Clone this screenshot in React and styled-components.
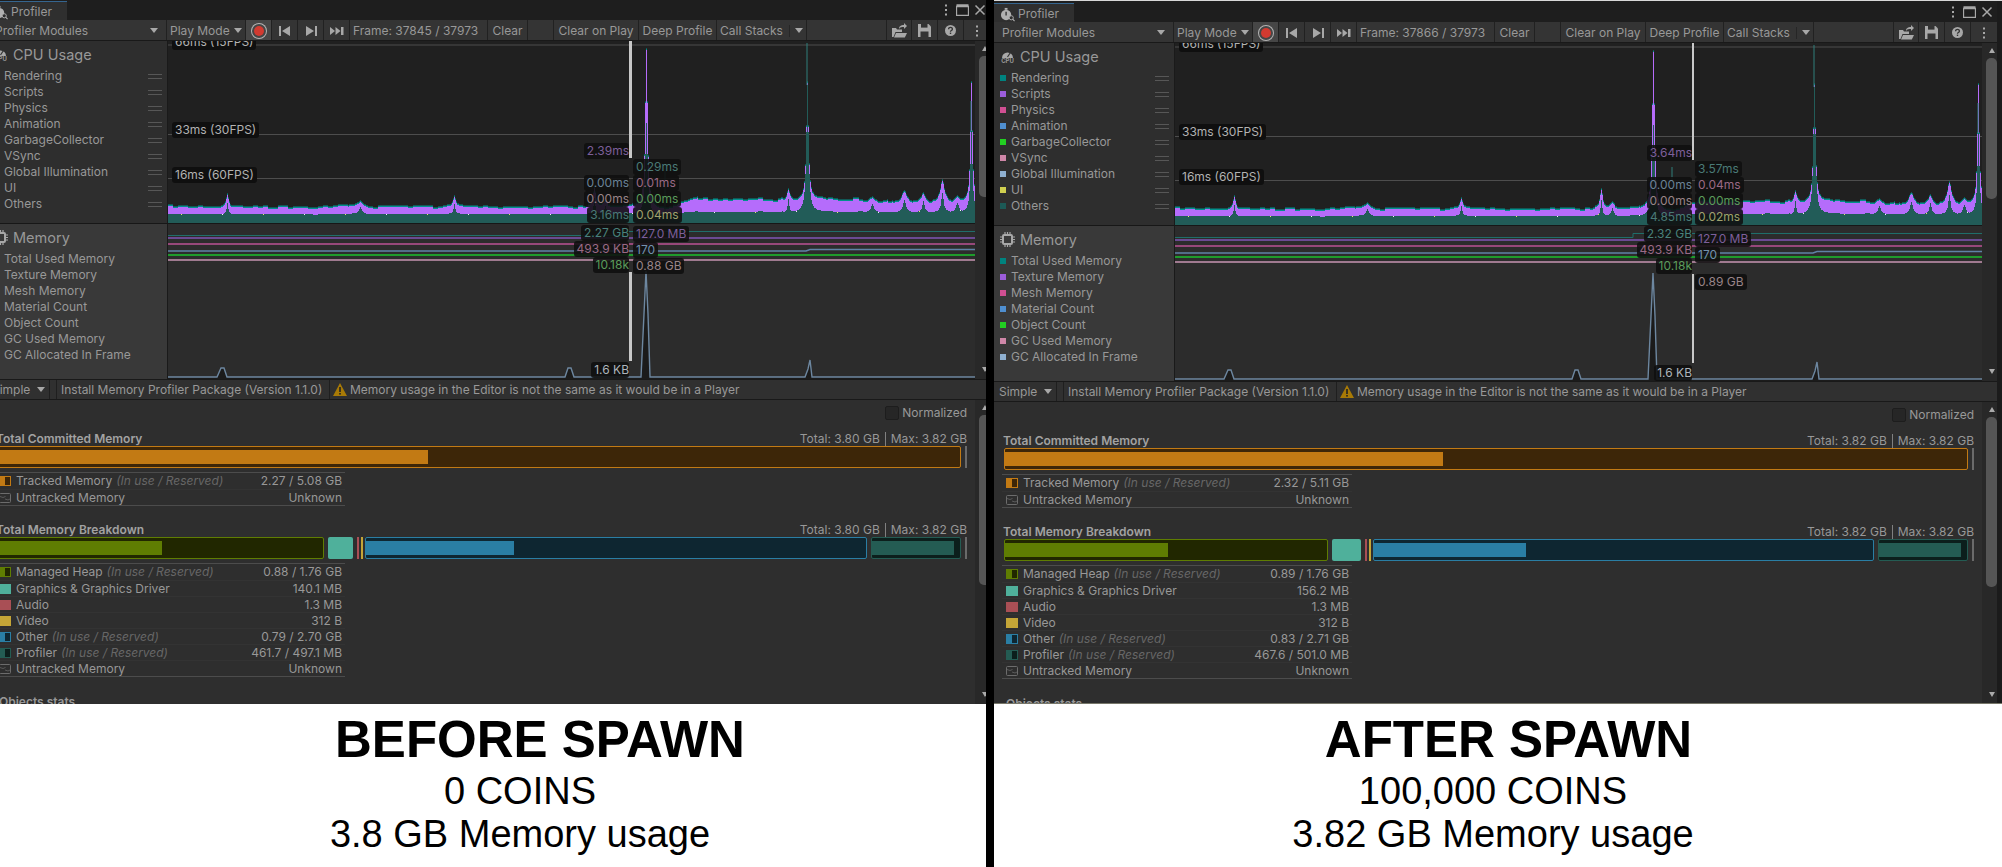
import styled, { createGlobalStyle } from 'styled-components'

const GlobalStyle = createGlobalStyle`
  html, body { margin: 0; padding: 0; background: #000; overflow: hidden; }
  * { box-sizing: border-box; }
`

const CHART_W = 807
const CPU_H = 182
const MEM_H = 155

// same history in both captures, so the graph only gets built once
const SPIKES = [
  [59, 154, 1.6], [192, 161, 3], [286, 156, 1.6], [426, 147, 1.6], [437, 160, 2.2],
  [478, 9, 1.4, 82], [620, 149, 1.5], [639, 42, 1.3, 44], [704, 157, 2.5], [736, 151, 3.2],
  [755, 153, 2.2], [774, 140, 2.4], [789, 156, 3], [803, 42, 1.2, 90]
]

const lorentz = (d, w) => 1 / (1 + (d / w) * (d / w))

function buildCpu () {
  let seed = 7
  const rnd = () => {
    seed = (seed * 16807) % 2147483647
    return seed / 2147483647
  }
  let purple = ''
  let strip = ''
  let dark = ''
  let specks = []
  let wobble = 0
  for (let x = 0; x < CHART_W; x++) {
    if (x % 5 === 0) wobble = wobble * 0.5 + (rnd() - 0.5) * 2.6
    const rise = x < 500 ? 0 : Math.min(1, (x - 500) / 30)
    const top0 = 166.5 - rise * 7 + wobble + (x > 690 ? 2 : 0)
    const bottom0 = 173 - rise * 2 + wobble * 0.3
    let top = top0
    let darkTop = bottom0
    SPIKES.forEach(([sx, peak, w, tealPeak]) => {
      const d = Math.abs(x - sx)
      top = Math.min(top, top0 - (top0 - peak) * lorentz(d, w))
      if (tealPeak) darkTop = Math.min(darkTop, bottom0 - (bottom0 - tealPeak) * lorentz(d, w))
      else darkTop = Math.min(darkTop, bottom0 - (bottom0 - peak) * 0.6 * lorentz(d, w * 0.6))
    })
    top = Math.round(top)
    darkTop = Math.max(top, Math.round(darkTop))
    strip += `M${x} ${top - 1.5}h1V${top}h-1z`
    if (darkTop > top) purple += `M${x} ${top}h1V${darkTop}h-1z`
    dark += `M${x} ${darkTop}h1V${CPU_H}h-1z`
    if (x % 41 === 13) specks.push({ x, y: darkTop, c: x % 2 ? '#e6e66a' : '#f2f2f2' })
  }
  return { purple, strip, dark, specks }
}

const cpu = buildCpu()

const CPU_LINES = [4, 93.5, 137.5]
const MEM_LINES = [
  { d: 'M0 11.5H458V7.5H807', c: '#1f6e6a', w: 1 },
  { d: 'M0 14H807', c: '#6b4a93', w: 2 },
  { d: 'M0 20H807', c: '#97487a', w: 2 },
  { d: 'M0 27H638L642 25.5H807', c: '#5f82a6', w: 1.5 },
  { d: 'M0 31H807', c: '#1f9b2c', w: 2 },
  { d: 'M0 36H807', c: '#a07a90', w: 2 }
]
const MEM_PEAKS = 'M0 153H49L53 144L56 144L59 153H397L400 144L403 144L406 153H473L476 90L478 47L480 90L482 153H637L640 145L642 136L644 153H807'

const CPU_ROWS = [
  ['Rendering', '#00837f'], ['Scripts', '#9c5ddb'], ['Physics', '#d04f92'], ['Animation', '#4f8fd0'],
  ['GarbageCollector', '#22cf22'], ['VSync', '#cf87a8'], ['Global Illumination', '#8fb0d0'],
  ['UI', '#cfcf4f'], ['Others', '#1c5a56']
]
const MEM_ROWS = [
  ['Total Used Memory', '#00837f'], ['Texture Memory', '#9c5ddb'], ['Mesh Memory', '#d04f92'],
  ['Material Count', '#4f8fd0'], ['Object Count', '#22cf22'], ['GC Used Memory', '#cf87a8'],
  ['GC Allocated In Frame', '#8fb0d0']
]

const tone = {
  purple: '#7d5f9a', slate: '#6a8296', rose: '#998488', teal: '#4a7a76', tealLight: '#4a817c',
  pink: '#9a6a85', green: '#5b9c5b', olive: '#9fa16d', white: '#aeb5bc', blue: '#7391ad'
}

const PANELS = {
  left: {
    frame: '37845 / 37973',
    cursorX: 642,
    cursorW: 3,
    labelsBefore: [
      ['2.39ms', 102, tone.purple], ['0.00ms', 134, tone.slate], ['0.00ms', 150, tone.rose], ['3.16ms', 166, tone.teal],
      ['2.27 GB', 184, tone.tealLight], ['493.9 KB', 200, tone.pink], ['10.18k', 216, tone.green], ['1.6 KB', 321, tone.white]
    ],
    labelsAfter: [
      ['0.29ms', 118, tone.teal], ['0.01ms', 134, tone.pink], ['0.00ms', 150, tone.green], ['0.04ms', 166, tone.olive],
      ['127.0 MB', 185, tone.purple], ['170', 201, tone.blue], ['0.88 GB', 217, tone.rose]
    ],
    total: '3.80 GB',
    tracked: '2.27 / 5.08 GB',
    trackedFill: 430,
    segments: { green: [327, 164], teal: 25, blue: [502, 148], profiler: [90, 82] },
    rows: ['0.88 / 1.76 GB', '140.1 MB', '1.3 MB', '312 B', '0.79 / 2.70 GB', '461.7 / 497.1 MB', 'Unknown']
  },
  right: {
    frame: '37866 / 37973',
    cursorX: 698,
    cursorW: 2,
    labelsBefore: [
      ['3.64ms', 102, tone.purple], ['0.00ms', 134, tone.slate], ['0.00ms', 150, tone.rose], ['4.85ms', 166, tone.teal],
      ['2.32 GB', 183, tone.tealLight], ['493.9 KB', 199, tone.pink], ['10.18k', 215, tone.green], ['1.6 KB', 322, tone.white]
    ],
    labelsAfter: [
      ['3.57ms', 118, tone.teal], ['0.04ms', 134, tone.pink], ['0.00ms', 150, tone.green], ['0.02ms', 166, tone.olive],
      ['127.0 MB', 188, tone.purple], ['170', 204, tone.blue], ['0.89 GB', 231, tone.rose]
    ],
    total: '3.82 GB',
    tracked: '2.32 / 5.11 GB',
    trackedFill: 438,
    segments: { green: [324, 163], teal: 29, blue: [501, 152], profiler: [90, 82] },
    rows: ['0.89 / 1.76 GB', '156.2 MB', '1.3 MB', '312 B', '0.83 / 2.71 GB', '467.6 / 501.0 MB', 'Unknown']
  }
}

const C = {
  amber: ['#c27a14', '#3d2608'],
  green: ['#5f7d02', '#212700'],
  teal: ['#4fb09b', '#4fb09b'],
  audio: ['#a94f55', '#a94f55'],
  video: ['#c4a537', '#c4a537'],
  blue: ['#2a7ea4', '#0e2631'],
  profiler: ['#245c53', '#0c1f1c']
}

function StopwatchIcon () {
  return (
    <svg width='15' height='15' viewBox='0 0 16 16'>
      <circle cx='6.5' cy='8.5' r='5.5' fill='#b0b0b0' />
      <rect x='5' y='1' width='3' height='2' fill='#b0b0b0' />
      <path d='M6.5 5v4' stroke='#2e2e2e' strokeWidth='1.4' />
      <circle cx='12' cy='11.5' r='2.2' fill='#2e2e2e' stroke='#b0b0b0' />
      <path d='M13.5 13l2 2' stroke='#b0b0b0' strokeWidth='1.2' />
    </svg>
  )
}

function GaugeIcon () {
  return (
    <svg width='15' height='9' viewBox='0 0 15 9'>
      <path d='M2 9a5.5 5.5 0 1 1 11 0z' fill='#a8a8a8' />
      <path d='M7.5 8L10.5 3.5' stroke='#333' strokeWidth='1.2' />
    </svg>
  )
}

function ChipIcon () {
  return (
    <svg width='15' height='15' viewBox='0 0 15 15'>
      <rect x='3' y='3' width='9' height='9' rx='1' fill='none' stroke='#a8a8a8' strokeWidth='2' />
      <path d='M5 0v3M7.5 0v3M10 0v3M5 12v3M7.5 12v3M10 12v3M0 5h3M0 7.5h3M0 10h3M12 5h3M12 7.5h3M12 10h3' stroke='#a8a8a8' strokeWidth='1.2' />
    </svg>
  )
}

function TransportIcon ({ type }) {
  const paths = {
    prev: 'M1 2h2v10H1zM12 2v10L4 7z',
    next: 'M2 2v10l8-5zM11 2h2v10h-2z',
    last: 'M0 3v8l5-4zM5.5 3v8l5-4zM11 3h2.5v8H11z'
  }
  return <svg width='14' height='14' viewBox='0 0 14 14'><path d={paths[type]} fill='#a8a8a8' /></svg>
}

function LoadIcon () {
  return (
    <svg width='15' height='15' viewBox='0 0 15 15'>
      <path d='M0 5h4l1 1.5h5V9H3.5L1.5 14H0zM4 10h11l-2.2 4.5H2z' fill='#a8a8a8' />
      <path d='M7 6c0-3 2-4 5-4V0l3 3-3 3V4c-2 0-4 0-5 2z' fill='#a8a8a8' />
    </svg>
  )
}

function SaveIcon () {
  return (
    <svg width='13' height='13' viewBox='0 0 13 13'>
      <path d='M0 0h10.5L13 2.5V13H0z' fill='#a8a8a8' />
      <rect x='3' y='0' width='6.5' height='3.6' fill='#333' />
      <rect x='2.5' y='7.5' width='8' height='5.5' fill='#333' />
    </svg>
  )
}

function HelpIcon () {
  return (
    <svg width='11' height='11' viewBox='0 0 11 11'>
      <circle cx='5.5' cy='5.5' r='5.5' fill='#a8a8a8' />
      <path d='M3.6 4.2c0-2.4 3.8-2.4 3.8 0 0 1.3-1.9 1.4-1.9 2.5' fill='none' stroke='#333' strokeWidth='1.3' />
      <rect x='4.8' y='7.6' width='1.4' height='1.4' fill='#333' />
    </svg>
  )
}

function DotsIcon () {
  return (
    <svg width='4' height='12' viewBox='0 0 4 12'>
      <rect x='1' y='0.5' width='2' height='2' fill='#a8a8a8' />
      <rect x='1' y='5' width='2' height='2' fill='#a8a8a8' />
      <rect x='1' y='9.5' width='2' height='2' fill='#a8a8a8' />
    </svg>
  )
}

function WarningIcon () {
  return (
    <svg width='14' height='13' viewBox='0 0 14 13'>
      <path d='M7 0l7 13H0z' fill='#a87a06' />
      <rect x='6.2' y='4' width='1.6' height='5' fill='#222' />
      <rect x='6.2' y='10' width='1.6' height='1.6' fill='#222' />
    </svg>
  )
}

function UntrackedSwatch () {
  return (
    <svg width='12' height='10' viewBox='0 0 12 10'>
      <rect x='0.5' y='0.5' width='11' height='9' rx='1' fill='none' stroke='#6c6c6c' />
      <path d='M1 3.5l3 1 2.5 -1M6 6l3 1 2 -1' fill='none' stroke='#5a5a5a' />
    </svg>
  )
}

function CpuGraph () {
  return (
    <GraphSvg width={CHART_W} height={CPU_H} viewBox={`0 0 ${CHART_W} ${CPU_H}`}>
      {CPU_LINES.map(y => <line key={y} x1='0' x2={CHART_W} y1={y} y2={y} stroke='#4d4d4d' />)}
      <path d={cpu.strip} fill='#02908c' />
      <path d={cpu.purple} fill='#b56cfb' />
      <path d={cpu.dark} fill='#225c58' />
      <path d='M639 2V44M497 124V172M803 90V60' stroke='#2f7f7a' />
      {cpu.specks.map(s => <rect key={s.x} x={s.x} y={s.y} width='1' height='1' fill={s.c} />)}
    </GraphSvg>
  )
}

function MemoryGraph () {
  return (
    <GraphSvg width={CHART_W} height={MEM_H} viewBox={`0 0 ${CHART_W} ${MEM_H}`}>
      {MEM_LINES.map(l => <path key={l.c} d={l.d} fill='none' stroke={l.c} strokeWidth={l.w} />)}
      <path d={`${MEM_PEAKS}V155H0z`} fill='#1b1b1b' />
      <path d={MEM_PEAKS} fill='none' stroke='#6d87a0' strokeWidth='1.4' />
    </GraphSvg>
  )
}

function Legend ({ rows, grips }) {
  return rows.map(([name, color]) => (
    <LegendRow key={name}>
      <Dot $color={color} />
      <LegendName>{name}</LegendName>
      {grips && <Grip />}
    </LegendRow>
  ))
}

function Segment ({ colors, width, fill }) {
  return (
    <BarSegment $w={width} $edge={colors[0]} $bg={colors[1]}>
      <BarFill $w={fill} $color={colors[0]} />
    </BarSegment>
  )
}

function Split ({ colors }) {
  return <SplitSwatch $a={colors[0]} $b={colors[1]} />
}

function BreakdownRow ({ swatch, name, note, value }) {
  return (
    <TableRow>
      {swatch}
      <RowName>{name}{note && <RowNote>(In use / Reserved)</RowNote>}</RowName>
      <RowValue>{value}</RowValue>
    </TableRow>
  )
}

function SectionHead ({ title, total }) {
  return (
    <HeadRow>
      <HeadTitle>{title}</HeadTitle>
      <HeadTotals>
        <span>Total: {total}</span>
        <HeadSep />
        <span>Max: 3.82 GB</span>
      </HeadTotals>
    </HeadRow>
  )
}

function Profiler ({ data, side }) {
  const { green, teal, blue, profiler } = data.segments
  return (
    <Window $side={side}>
      <TabBar>
        <Tab><StopwatchIcon /><span>Profiler</span></Tab>
        <WindowControls>
          <WindowControl><DotsIcon /></WindowControl>
          <WindowControl>
            <svg width='13' height='12' viewBox='0 0 13 12'><path d='M0.5 2.5h12v9H0.5zM0.5 1h12' fill='none' stroke='#a8a8a8' strokeWidth='1.3' /></svg>
          </WindowControl>
          <WindowControl>
            <svg width='12' height='12' viewBox='0 0 12 12'><path d='M1.5 1.5l9 9M10.5 1.5l-9 9' stroke='#a8a8a8' strokeWidth='1.5' /></svg>
          </WindowControl>
        </WindowControls>
      </TabBar>

      <Toolbar>
        <ToolButton $w={179} $pad={8} $between>Profiler Modules<Caret /></ToolButton>
        <ToolButton $w={78} $pad={3}>Play Mode<Caret $ml={4} /></ToolButton>
        <ToolButton $w={25} $center $active><RecordDot /></ToolButton>
        <ToolButton $w={25} $center><TransportIcon type='prev' /></ToolButton>
        <ToolButton $w={25} $center><TransportIcon type='next' /></ToolButton>
        <ToolButton $w={25} $center><TransportIcon type='last' /></ToolButton>
        <ToolButton $w={137} $pad={3}>Frame: {data.frame}</ToolButton>
        <ToolButton $w={39} $center>Clear</ToolButton>
        <ToolButton $w={25} />
        <ToolButton $w={84} $center>Clear on Play</ToolButton>
        <ToolButton $w={77} $center>Deep Profile</ToolButton>
        <ToolButton $w={89} $pad={3}>Call Stacks<CaretSep /><Caret /></ToolButton>
        <ToolFill />
        <ToolButton $w={24} $center><LoadIcon /></ToolButton>
        <ToolButton $w={25} $center><SaveIcon /></ToolButton>
        <ToolButton $w={25} $center><HelpIcon /></ToolButton>
        <ToolButton $w={26} $center><DotsIcon /></ToolButton>
      </Toolbar>

      <Modules>
        <ModuleStack>
          <ModuleRow $h={CPU_H} $border>
            <Sidebar>
              <ModuleHead>
                <CpuBadge><GaugeIcon /><CpuWord>CPU</CpuWord></CpuBadge>
                <ModuleTitle>CPU Usage</ModuleTitle>
              </ModuleHead>
              <Legend rows={CPU_ROWS} grips />
            </Sidebar>
            <GraphBox $bg='#202020'>
              <CpuGraph />
              <AxisLabel $top={-7}>66ms (15FPS)</AxisLabel>
              <AxisLabel $top={81}>33ms (30FPS)</AxisLabel>
              <AxisLabel $top={126}>16ms (60FPS)</AxisLabel>
            </GraphBox>
          </ModuleRow>
          <ModuleRow $h={MEM_H}>
            <Sidebar $selected>
              <ModuleHead>
                <ChipSlot><ChipIcon /></ChipSlot>
                <ModuleTitle>Memory</ModuleTitle>
              </ModuleHead>
              <Legend rows={MEM_ROWS} />
            </Sidebar>
            <GraphBox $bg='#2c2c2c'>
              <MemoryGraph />
            </GraphBox>
          </ModuleRow>
          <CursorLine $x={data.cursorX} $w={data.cursorW} $top={0} $h={117} />
          <CursorLine $x={data.cursorX} $w={data.cursorW} $top={231} $h={89} />
          {data.labelsBefore.map(([text, y, color]) => (
            <ValueLabel key={text + y} $before $x={data.cursorX} $y={y} $color={color}>{text}</ValueLabel>
          ))}
          {data.labelsAfter.map(([text, y, color]) => (
            <ValueLabel key={text + y} $x={data.cursorX + data.cursorW + 1} $y={y} $color={color}>{text}</ValueLabel>
          ))}
        </ModuleStack>
        <ScrollBar $thumbTop={15} $thumbH={141} />
      </Modules>

      <BottomBar>
        <BarButton $w={62}>Simple<Caret $ml={7} /></BarButton>
        <BarButton $w={6} />
        <BarButton $w={272} $pad={4}>Install Memory Profiler Package (Version 1.1.0)</BarButton>
        <Notice><WarningIcon />Memory usage in the Editor is not the same as it would be in a Player</Notice>
      </BottomBar>

      <Details>
        <DetailsBody>
          <NormalizedRow><CheckBox />Normalized</NormalizedRow>

          <SectionHead title='Total Committed Memory' total={data.total} />
          <MemoryBar>
            <Segment colors={C.amber} width={964} fill={data.trackedFill} />
            <BarTick />
          </MemoryBar>
          <Table>
            <BreakdownRow swatch={<Split colors={C.amber} />} name='Tracked Memory' note value={data.tracked} />
            <BreakdownRow swatch={<UntrackedSwatch />} name='Untracked Memory' value='Unknown' />
          </Table>

          <SectionHead title='Total Memory Breakdown' total={data.total} />
          <MemoryBar>
            <Segment colors={C.green} width={green[0]} fill={green[1]} />
            <BarBlock $w={teal} $color={C.teal[0]} />
            <TickPair>
              <BarSliver $color={C.audio[0]} />
              <BarSliver $color={C.video[0]} />
            </TickPair>
            <Segment colors={C.blue} width={blue[0]} fill={blue[1]} />
            <Segment colors={C.profiler} width={profiler[0]} fill={profiler[1]} />
            <BarTick />
          </MemoryBar>
          <Table>
            <BreakdownRow swatch={<Split colors={C.green} />} name='Managed Heap' note value={data.rows[0]} />
            <BreakdownRow swatch={<Solid $color={C.teal[0]} />} name='Graphics &amp; Graphics Driver' value={data.rows[1]} />
            <BreakdownRow swatch={<Solid $color={C.audio[0]} />} name='Audio' value={data.rows[2]} />
            <BreakdownRow swatch={<Solid $color={C.video[0]} />} name='Video' value={data.rows[3]} />
            <BreakdownRow swatch={<Split colors={C.blue} />} name='Other' note value={data.rows[4]} />
            <BreakdownRow swatch={<Split colors={C.profiler} />} name='Profiler' note value={data.rows[5]} />
            <BreakdownRow swatch={<UntrackedSwatch />} name='Untracked Memory' value={data.rows[6]} />
          </Table>

          <Foldout>Objects stats...</Foldout>
        </DetailsBody>
        <ScrollBar $thumbTop={15} $thumbH={170} />
      </Details>
    </Window>
  )
}

export default function App () {
  return (
    <Page>
      <GlobalStyle />
      <Column $w={986}>
        <Clip><Profiler data={PANELS.left} side='left' /></Clip>
        <Caption $offset={94} $lineShift={40}>
          <CaptionTitle>BEFORE SPAWN</CaptionTitle>
          <CaptionLine>0 COINS</CaptionLine>
          <CaptionLine>3.8 GB Memory usage</CaptionLine>
        </Caption>
      </Column>
      <Column $w={1008}>
        <Clip $edge><Profiler data={PANELS.right} side='right' /><EdgeStrip /></Clip>
        <Caption $offset={21} $lineShift={31}>
          <CaptionTitle>AFTER SPAWN</CaptionTitle>
          <CaptionLine>100,000 COINS</CaptionLine>
          <CaptionLine>3.82 GB Memory usage</CaptionLine>
        </Caption>
      </Column>
    </Page>
  )
}

const Page = styled.div`
  width: 2002px;
  height: 867px;
  display: flex;
  gap: 8px;
  background: #000;
  overflow: hidden;
`

const Column = styled.div`
  width: ${p => p.$w}px;
  display: flex;
  flex-direction: column;
`

const Clip = styled.div`
  height: 704px;
  display: flex;
  overflow: hidden;
  background: #1c1c1c;
  border-bottom: ${p => p.$edge ? '1px solid #77776a' : '0'};
`

const EdgeStrip = styled.div`
  flex: 1;
  background: linear-gradient(#d8d8d8 0 1px, #1b1b1b 1px);
`

const Caption = styled.div`
  flex: 1;
  background: #fff;
  color: #000;
  padding: 5px 0 0 ${p => p.$offset}px;
  text-align: center;
  font-family: "Liberation Sans", Arial, sans-serif;
  & > div + div { margin-right: ${p => p.$lineShift}px; }
`

const CaptionTitle = styled.div`
  font-size: 51px;
  line-height: 61px;
  font-weight: 700;
`

const CaptionLine = styled.div`
  font-size: 38px;
  line-height: 43px;
`

const Window = styled.div`
  flex: none;
  width: 1003px;
  height: ${p => p.$side === 'left' ? 706 : 704}px;
  margin: ${p => p.$side === 'left' ? '-2px 0 0 -13px' : '0'};
  display: flex;
  flex-direction: column;
  background: #2e2e2e;
  color: #989898;
  font-family: Inter, "Noto Sans", sans-serif;
  font-size: 12px;
  line-height: 16px;
  border-top: 1px solid #d8d8d8;
`

const TabBar = styled.div`
  height: 21px;
  display: flex;
  align-items: flex-end;
  background: #1e1e1e;
`

const Tab = styled.div`
  width: 80px;
  height: 19px;
  display: flex;
  align-items: center;
  gap: 3px;
  padding: 2px 0 0 6px;
  background: #2f2f2f;
  border-top: 1px solid #35658f;
  font-size: 12px;
`

const WindowControls = styled.div`
  margin-left: auto;
  height: 21px;
  padding-right: 2px;
  display: flex;
  align-items: center;
`

const WindowControl = styled.div`
  width: 17px;
  display: flex;
  justify-content: center;
`

const Toolbar = styled.div`
  height: 21px;
  display: flex;
  gap: 1px;
  background: #212121;
  border-bottom: 1px solid #191919;
`

const ToolButton = styled.div`
  flex: none;
  width: ${p => p.$w}px;
  height: 20px;
  display: flex;
  align-items: center;
  padding: 1px ${p => p.$pad || 0}px 0;
  justify-content: ${p => p.$between ? 'space-between' : p.$center ? 'center' : 'flex-start'};
  background: ${p => p.$active ? '#464646' : '#343434'};
  white-space: nowrap;
`

const ToolFill = styled.div`
  flex: 1;
  background: #343434;
`

const Caret = styled.i`
  width: 0;
  height: 0;
  margin-left: ${p => p.$ml || 0}px;
  border-left: 4px solid transparent;
  border-right: 4px solid transparent;
  border-top: 5px solid #a8a8a8;
`

const CaretSep = styled.i`
  width: 1px;
  height: 12px;
  margin: 0 6px 0 6px;
  background: #262626;
`

const RecordDot = styled.i`
  width: 10px;
  height: 10px;
  border-radius: 50%;
  background: #d23a30;
  box-shadow: 0 0 0 2px #464646, 0 0 0 3px #b5b5b5;
`

const Modules = styled.div`
  height: 338px;
  display: flex;
`

const ModuleStack = styled.div`
  position: relative;
  width: 988px;
  overflow: hidden;
`

const ModuleRow = styled.div`
  height: ${p => p.$h + (p.$border ? 1 : 0)}px;
  display: flex;
  border-bottom: ${p => p.$border ? '1px solid #171717' : '0'};
`

const Sidebar = styled.div`
  flex: none;
  width: 181px;
  padding: 0 0 0 6px;
  background: ${p => p.$selected ? '#393939' : '#2e2e2e'};
  border-right: 1px solid #1a1a1a;
`

const ModuleHead = styled.div`
  height: 27px;
  display: flex;
  align-items: center;
  gap: 5px;
`

const ModuleTitle = styled.div`
  font-size: 14.5px;
`

const CpuBadge = styled.div`
  width: 15px;
  display: flex;
  flex-direction: column;
  align-items: center;
  gap: 0;
`

const CpuWord = styled.span`
  font-size: 6px;
  line-height: 6px;
  font-weight: 700;
`

const ChipSlot = styled.div`
  width: 15px;
  height: 15px;
  display: flex;
`

const LegendRow = styled.div`
  height: 16px;
  display: flex;
  align-items: center;
  gap: 5px;
  padding-right: 5px;
`

const Dot = styled.i`
  width: 6px;
  height: 6px;
  background: ${p => p.$color};
`

const LegendName = styled.span`
  flex: 1;
  white-space: nowrap;
`

const Grip = styled.i`
  width: 14px;
  height: 5px;
  border-top: 1px solid #575757;
  border-bottom: 1px solid #575757;
`

const GraphBox = styled.div`
  position: relative;
  flex: none;
  width: ${CHART_W}px;
  overflow: hidden;
  background: ${p => p.$bg};
`

const GraphSvg = styled.svg`
  display: block;
`

const AxisLabel = styled.div`
  position: absolute;
  left: 4px;
  top: ${p => p.$top}px;
  height: 16px;
  padding: 0 3px;
  border-radius: 3px;
  background: #0f0f0f;
  color: #b2b2b2;
  white-space: nowrap;
`

const CursorLine = styled.div`
  position: absolute;
  left: ${p => p.$x}px;
  top: ${p => p.$top}px;
  width: ${p => p.$w}px;
  height: ${p => p.$h}px;
  background: #c8c8c8;
`

const ValueLabel = styled.div`
  position: absolute;
  top: ${p => p.$y}px;
  ${p => p.$before
    ? `right: calc(100% - ${p.$x}px); padding: 0 0 0 3px;`
    : `left: ${p.$x}px; padding: 0 3px;`}
  height: 16px;
  border-radius: 3px;
  background: rgba(15, 15, 15, 0.88);
  color: ${p => p.$color};
  white-space: nowrap;
`

const BottomBar = styled.div`
  height: 21px;
  display: flex;
  gap: 1px;
  background: #1f1f1f;
  border-bottom: 1px solid #191919;
  border-top: 1px solid #191919;
`

const BarButton = styled.div`
  flex: none;
  width: ${p => p.$w}px;
  display: flex;
  align-items: center;
  padding-left: ${p => p.$pad === undefined ? 5 : p.$pad}px;
  background: #303030;
  white-space: nowrap;
`

const Notice = styled.div`
  flex: 1;
  display: flex;
  align-items: center;
  gap: 3px;
  padding-left: 3px;
  background: #303030;
`

const Details = styled.div`
  flex: 1;
  min-height: 0;
  display: flex;
  overflow: hidden;
  background: #2e2e2e;
`

const DetailsBody = styled.div`
  width: 988px;
  padding: 6px 8px 0 10px;
`

const NormalizedRow = styled.div`
  height: 14px;
  display: flex;
  justify-content: flex-end;
  align-items: center;
  gap: 3px;
`

const CheckBox = styled.i`
  width: 14px;
  height: 14px;
  border: 1px solid #1d1d1d;
  border-radius: 2px;
  background: #262626;
`

const HeadRow = styled.div`
  height: 15px;
  margin-top: 11px;
  display: flex;
  justify-content: space-between;
  align-items: center;
  & + div + div + & { margin-top: 16px; }
`

const HeadTitle = styled.div`
  margin-left: -1px;
  font-weight: 600;
  color: #a2a2a2;
`

const HeadTotals = styled.div`
  display: flex;
  align-items: center;
  gap: 5px;
`

const HeadSep = styled.i`
  width: 1px;
  height: 14px;
  background: #808080;
`

const MemoryBar = styled.div`
  height: 22px;
  display: flex;
  gap: 4px;
`

const BarSegment = styled.div`
  flex: none;
  width: ${p => p.$w}px;
  height: 22px;
  padding: 3px 0;
  border: 1px solid ${p => p.$edge};
  border-radius: 2px;
  background: ${p => p.$bg};
`

const BarFill = styled.div`
  width: ${p => p.$w}px;
  height: 14px;
  background: ${p => p.$color};
`

const BarBlock = styled.div`
  flex: none;
  width: ${p => p.$w}px;
  border-radius: 2px;
  background: ${p => p.$color};
`

const TickPair = styled.div`
  flex: none;
  width: 6px;
  margin-right: -2px;
  display: flex;
  justify-content: space-between;
`

const BarSliver = styled.div`
  width: 2px;
  background: ${p => p.$color};
`

const BarTick = styled.div`
  flex: none;
  width: 2px;
  background: #6a6a6a;
`

const Table = styled.div`
  width: 350px;
  margin: 4px 0 0 -2px;
  border-top: 1px solid #4c4c4c;
  border-bottom: 1px solid #4c4c4c;
`

const TableRow = styled.div`
  height: 16px;
  display: flex;
  align-items: center;
  gap: 5px;
  padding: 0 3px 0 4px;
  white-space: nowrap;
  & + & { border-top: 1px solid #333; }
`

const RowName = styled.span`
  flex: 1;
`

const RowNote = styled.span`
  margin-left: 4px;
  font-style: italic;
  color: #676767;
`

const RowValue = styled.span`
  text-align: right;
`

const Solid = styled.i`
  width: 12px;
  height: 10px;
  background: ${p => p.$color};
`

const SplitSwatch = styled.i`
  width: 12px;
  height: 10px;
  border: 1px solid ${p => p.$a};
  background: linear-gradient(90deg, ${p => p.$a} 50%, ${p => p.$b} 50%);
`

const Foldout = styled.div`
  margin: 17px 0 0 -4px;
  padding-left: 6px;
  font-weight: 600;
`

const ScrollTrack = styled.div`
  flex: none;
  width: 15px;
  height: 100%;
  display: flex;
  flex-direction: column;
  align-items: flex-end;
  background: #282828;
`

const ScrollThumb = styled.div`
  width: 11px;
  height: ${p => p.$h}px;
  margin-top: ${p => p.$top}px;
  border-radius: 5px;
  background: #555;
`

const ScrollArrow = styled.i`
  position: relative;
  top: ${p => p.$down ? -7 : 5}px;
  margin: ${p => p.$down ? 'auto 2px 0 0' : '0 2px 0 0'};
  width: 0;
  height: 0;
  border-left: 3.5px solid transparent;
  border-right: 3.5px solid transparent;
  ${p => p.$down ? 'border-top: 5px solid #aaa;' : 'border-bottom: 5px solid #aaa;'}
`

function ScrollBar ({ $thumbTop, $thumbH }) {
  return (
    <ScrollTrack>
      <ScrollArrow />
      <ScrollThumb $top={$thumbTop - 5} $h={$thumbH} />
      <ScrollArrow $down />
    </ScrollTrack>
  )
}
